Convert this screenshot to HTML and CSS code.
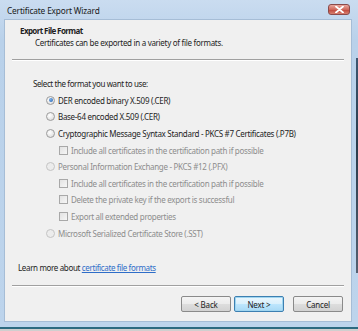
FILE: index.html
```html
<!DOCTYPE html>
<html lang="en">
<head>
  <meta charset="UTF-8">
  <meta name="viewport" content="width=device-width, initial-scale=1.0">
  <title>Certificate Export Wizard</title>
  <link rel="stylesheet" href="styles.css">
</head>
<body>
  <div class="window">
    <div class="titlebar">
      <span class="title">Certificate Export Wizard</span>
      <span class="close-btn">
        <svg width="9" height="7" viewBox="0 0 9 7">
          <path d="M1 0.5 L8 6.5 M8 0.5 L1 6.5" stroke="#fff" stroke-width="1.8" stroke-linecap="round"/>
        </svg>
      </span>
    </div>

    <div class="client">
      <div class="header">
        <div class="heading">Export File Format</div>
        <div class="subhead">Certificates can be exported in a variety of file formats.</div>
      </div>
      <div class="sep"></div>

      <div class="content">
        <p class="prompt">Select the format you want to use:</p>
        <ul class="options">
          <li class="option"><span class="radio checked"></span>DER encoded binary X.509 (.CER)</li>
          <li class="option"><span class="radio"></span>Base-64 encoded X.509 (.CER)</li>
          <li class="option"><span class="radio"></span>Cryptographic Message Syntax Standard - PKCS #7 Certificates (.P7B)</li>
          <li class="option sub disabled"><span class="check"></span>Include all certificates in the certification path if possible</li>
          <li class="option disabled"><span class="radio"></span>Personal Information Exchange - PKCS #12 (.PFX)</li>
          <li class="option sub disabled"><span class="check"></span>Include all certificates in the certification path if possible</li>
          <li class="option sub disabled"><span class="check"></span>Delete the private key if the export is successful</li>
          <li class="option sub disabled"><span class="check"></span>Export all extended properties</li>
          <li class="option disabled"><span class="radio"></span>Microsoft Serialized Certificate Store (.SST)</li>
        </ul>
      </div>

      <p class="learn">Learn more about <a href="#">certificate file formats</a></p>
      <div class="sep"></div>

      <div class="buttons">
        <button class="btn">&lt; Back</button>
        <button class="btn default">Next &gt;</button>
        <button class="btn cancel">Cancel</button>
      </div>
    </div>
  </div>
  <div class="desktop"></div>
</body>
</html>
```

FILE: styles.css
```css
body {
  margin: 0;
  width: 358px;
  height: 331px;
  overflow: hidden;
  background-color: #d9d9d9;
  font-family: "Noto Sans", "Open Sans", sans-serif;
  font-size: 8px;
  letter-spacing: -0.3px;
  color: #1e1e1e;
}
.window {
  height: 327px;
  box-sizing: border-box;
  padding: 0 6px 5px 4px;
  background: linear-gradient(to bottom, #cadcf0, #b9d1ea 40px, #bdd4ec);
  position: relative;
}
/* sliver of desktop showing past the right frame */
.window::after {
  content: "";
  position: absolute;
  right: 0;
  top: 58px;
  width: 2px;
  height: 215px;
  background: linear-gradient(to bottom, #3d5670, #2a3b4c 40%, #556070);
}
.titlebar {
  height: 19px;
  display: flex;
  align-items: flex-start;
  justify-content: space-between;
}
.title {
  margin: 5px 0 0 3px;
  font-size: 8.3px;
  letter-spacing: -0.15px;
  line-height: 12px;
  color: #1a1a1a;
}
.close-btn {
  width: 22px;
  height: 11px;
  margin: 4px 2px 0 0;
  box-sizing: border-box;
  border: 1px solid #8a4a4a;
  border-radius: 3px;
  background: linear-gradient(to bottom, #e8a8a0, #d0685c 50%, #c0483c 55%, #d88070);
  display: flex;
  align-items: center;
  justify-content: center;
}
.client {
  height: 303px;
  box-sizing: border-box;
  background-color: #f0f0f0;
  border: 1px solid #a6bdd6;
  display: flex;
  flex-direction: column;
}
.header {
  padding-top: 5px;
}
.heading {
  padding-left: 15px;
  line-height: 12px;
  font-weight: bold;
  letter-spacing: -0.6px;
}
.subhead {
  padding-left: 30px;
  line-height: 12px;
}
.sep {
  margin: 10px 7px 0 7px;
  height: 1px;
  border-top: 1px solid #a0a0a0;
  background-color: #ffffff;
}
.content {
  padding-left: 28px;
}
.prompt {
  margin: 16px 0 0 0;
  line-height: 14px;
  letter-spacing: -0.4px;
}
.options {
  list-style: none;
  margin: 1px 0 0 0;
  padding: 0;
}
.option {
  height: 16.6px;
  display: flex;
  align-items: center;
  padding-left: 13px;
}
.option.sub {
  padding-left: 26px;
}
.option.disabled {
  color: #8d8d8d;
}
.radio {
  width: 9px;
  height: 9px;
  box-sizing: border-box;
  border-radius: 50%;
  border: 1px solid #9c9c9c;
  background: radial-gradient(circle at 40% 35%, #ffffff, #d6d6d6);
  margin-right: 3px;
  display: flex;
  align-items: center;
  justify-content: center;
}
.radio.checked::after {
  content: "";
  width: 4px;
  height: 4px;
  border-radius: 50%;
  background: radial-gradient(circle at 40% 35%, #7cb0e8, #1f5fb0);
}
.option.disabled .radio {
  border-color: #c4c4c4;
  background: #ececec;
}
.check {
  width: 9px;
  height: 9px;
  box-sizing: border-box;
  border: 1px solid #a8a8a8;
  background: linear-gradient(to bottom right, #e2e2e2, #f6f6f6);
  margin-right: 3px;
}
.learn {
  margin: 20px 0 0 13px;
  line-height: 14px;
  letter-spacing: -0.35px;
}
.learn a {
  color: #2e6dc8;
  text-decoration: underline;
}
.sep + .buttons {
  margin-top: 9px;
}
.buttons {
  display: flex;
  justify-content: flex-end;
  padding-right: 8px;
}
.btn {
  width: 50px;
  height: 16px;
  padding: 0;
  font-family: inherit;
  font-size: 8px;
  letter-spacing: -0.2px;
  color: #1e1e1e;
  border: 1px solid #8a8a8a;
  border-radius: 2px;
  background: linear-gradient(to bottom, #f4f4f4, #ebebeb 50%, #dddddd 51%, #d2d2d2);
  margin-left: 3px;
}
.btn.default {
  border-color: #3c7fb1;
  box-shadow: inset 0 0 0 1px #9fd5f0;
  background: linear-gradient(to bottom, #eaf6fd, #d9f0fc 50%, #bee6fd 51%, #a7d9f5);
}
.btn.cancel {
  margin-left: 9px;
}
.desktop {
  height: 4px;
  border-top: 2px solid #2c6a80;
  background-color: #cfcfcf;
}
```
